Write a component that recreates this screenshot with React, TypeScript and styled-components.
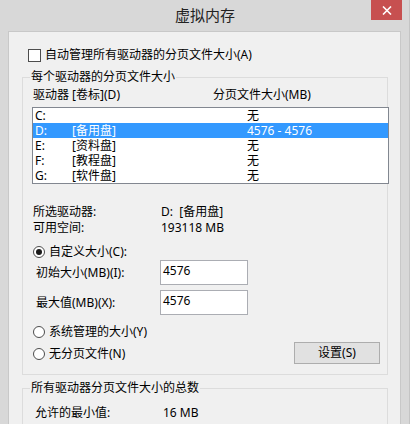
import React from "react";
import styled, { createGlobalStyle } from "styled-components";

const Global = createGlobalStyle`
  html, body { margin: 0; padding: 0; }
  body {
    width: 410px; height: 424px; overflow: hidden;
    font-family: "Noto Sans", "Noto Sans CJK SC", sans-serif;
    font-size: 12px; color: #000;
  }
  * { box-sizing: border-box; }
`;

const Window = styled.div`
  width: 410px;
  height: 424px;
  overflow: hidden;
  background: #d8d8d8;
  display: flex;
  flex-direction: column;
  border-right: 1px solid #c4c4c4;
`;

const TitleBar = styled.div`
  height: 31px;
  flex: none;
  display: grid;
  grid-template-columns: 1fr auto 1fr;
  padding: 0 7px 0 8px;
`;

const Title = styled.div`
  grid-column: 2;
  font-family: "Noto Sans CJK SC", sans-serif;
  font-size: 15px;
  line-height: 30px;
  color: #222;
`;

const CloseButton = styled.div`
  grid-column: 3;
  justify-self: end;
  width: 31px;
  height: 20px;
  background: #c75050;
  display: flex;
  align-items: center;
  justify-content: center;
`;

const Content = styled.div`
  flex: 1;
  margin: 0 8px 0 8px;
  background: #f0f0f0;
  border: 1px solid #c8c8c8;
  border-bottom: none;
  padding: 15px 12px 0 13px;
  display: flex;
  flex-direction: column;
`;

const CheckRow = styled.label`
  display: flex;
  align-items: center;
  gap: 4px;
  height: 16px;
  padding-left: 6px;
  line-height: 16px;
`;

const CheckBox = styled.span`
  width: 13px;
  height: 13px;
  border: 1px solid #4d4d4d;
  background: #fff;
  flex: none;
`;

const Group = styled.fieldset<{ $top: number }>`
  margin: ${(p) => p.$top}px 0 0 0;
  padding: 0 0 0 9px;
  border: 1px solid #dcdcdc;
  border-radius: 0;
  min-width: 0;
`;

const Legend = styled.legend`
  padding: 0 1px;
  margin-left: -2px;
  line-height: 16px;
  height: 16px;
`;

const HeaderRow = styled.div`
  display: grid;
  grid-template-columns: 180px 1fr;
  line-height: 16px;
  margin-top: 2px;
  padding-left: 1px;
`;

const ListBox = styled.div`
  margin: 4px -2px 0 0;
  height: 77px;
  border: 1px solid #828790;
  background: #fff;
  padding: 0;
  display: flex;
  flex-direction: column;
`;

const ListRow = styled.div<{ $selected?: boolean }>`
  height: 15px;
  line-height: 15px;
  display: grid;
  grid-template-columns: 37px 175px 1fr;
  padding-left: 2px;
  background: ${(p) => (p.$selected ? "#3399ff" : "transparent")};
  color: ${(p) => (p.$selected ? "#fff" : "#000")};
  white-space: nowrap;
  overflow: hidden;
`;

const Cell = styled.span`
  display: block;
  height: 15px;
  overflow: hidden;
`;

const InfoGrid = styled.div`
  display: grid;
  grid-template-columns: 128px 1fr;
  line-height: 16px;
  margin-top: 20px;
  padding-left: 1px;
`;

const RadioRow = styled.label<{ $top: number }>`
  display: flex;
  align-items: center;
  gap: 4px;
  height: 16px;
  line-height: 16px;
  margin-top: ${(p) => p.$top}px;
  padding-left: 1px;
`;

const Radio = styled.span<{ $checked?: boolean }>`
  width: 12px;
  height: 12px;
  border-radius: 50%;
  border: 1px solid #4d4d4d;
  background: #fff;
  flex: none;
  display: flex;
  align-items: center;
  justify-content: center;
  &::after {
    content: "";
    width: 6px;
    height: 6px;
    border-radius: 50%;
    background: ${(p) => (p.$checked ? "#1a1a1a" : "transparent")};
  }
`;

const FieldRow = styled.div<{ $top: number }>`
  display: grid;
  grid-template-columns: 124px 88px;
  align-items: center;
  margin-top: ${(p) => p.$top}px;
  padding-left: 4px;
`;

const FieldLabel = styled.span`
  line-height: 16px;
`;

const TextBox = styled.div`
  height: 25px;
  border: 1px solid #abadb3;
  background: #fff;
  padding: 1px 0 0 2px;
  line-height: 17px;
`;

const BottomRow = styled.div`
  display: flex;
  align-items: flex-end;
  justify-content: space-between;
  margin-top: 9px;
  padding-right: 7px;
  padding-bottom: 10px;
`;

const RadioColumn = styled.div`
  display: flex;
  flex-direction: column;
  padding-bottom: 2px;
`;

const Button = styled.div`
  width: 86px;
  height: 22px;
  border: 1px solid #adadad;
  background: #e1e1e1;
  display: flex;
  align-items: center;
  justify-content: center;
  line-height: 16px;
`;

const TotalRow = styled.div`
  display: grid;
  grid-template-columns: 128px 1fr;
  line-height: 16px;
  margin-top: 9px;
  padding-left: 3px;
  padding-bottom: 10px;
`;

const drives = [
  { d: "C:", label: "", size: "无" },
  { d: "D:", label: "[备用盘]", size: "4576 - 4576", selected: true },
  { d: "E:", label: "[资料盘]", size: "无" },
  { d: "F:", label: "[教程盘]", size: "无" },
  { d: "G:", label: "[软件盘]", size: "无" },
];

export default function App() {
  return (
    <>
      <Global />
      <Window>
        <TitleBar>
          <Title>虚拟内存</Title>
          <CloseButton>
            <svg width="10" height="9" viewBox="0 0 10 9">
              <path d="M1 0.5 L9 8.5 M9 0.5 L1 8.5" stroke="#fff" strokeWidth="1.6" />
            </svg>
          </CloseButton>
        </TitleBar>
        <Content>
          <CheckRow>
            <CheckBox />
            <span>自动管理所有驱动器的分页文件大小(A)</span>
          </CheckRow>
          <Group $top={6}>
            <Legend>每个驱动器的分页文件大小</Legend>
            <HeaderRow>
              <span>驱动器 [卷标](D)</span>
              <span>分页文件大小(MB)</span>
            </HeaderRow>
            <ListBox>
              {drives.map((r) => (
                <ListRow key={r.d} $selected={r.selected}>
                  <Cell>{r.d}</Cell>
                  <Cell>{r.label}</Cell>
                  <Cell>{r.size}</Cell>
                </ListRow>
              ))}
            </ListBox>
            <InfoGrid>
              <span>所选驱动器:</span>
              <span>D:&nbsp;&nbsp;[备用盘]</span>
              <span>可用空间:</span>
              <span>193118 MB</span>
            </InfoGrid>
            <RadioRow $top={8}>
              <Radio $checked />
              <span>自定义大小(C):</span>
            </RadioRow>
            <FieldRow $top={0}>
              <FieldLabel>初始大小(MB)(I):</FieldLabel>
              <TextBox>4576</TextBox>
            </FieldRow>
            <FieldRow $top={5}>
              <FieldLabel>最大值(MB)(X):</FieldLabel>
              <TextBox>4576</TextBox>
            </FieldRow>
            <BottomRow>
              <RadioColumn>
                <RadioRow $top={0}>
                  <Radio />
                  <span>系统管理的大小(Y)</span>
                </RadioRow>
                <RadioRow $top={6}>
                  <Radio />
                  <span>无分页文件(N)</span>
                </RadioRow>
              </RadioColumn>
              <Button>设置(S)</Button>
            </BottomRow>
          </Group>
          <Group $top={5}>
            <Legend>所有驱动器分页文件大小的总数</Legend>
            <TotalRow>
              <span>允许的最小值:</span>
              <span>16 MB</span>
            </TotalRow>
          </Group>
        </Content>
      </Window>
    </>
  );
}
